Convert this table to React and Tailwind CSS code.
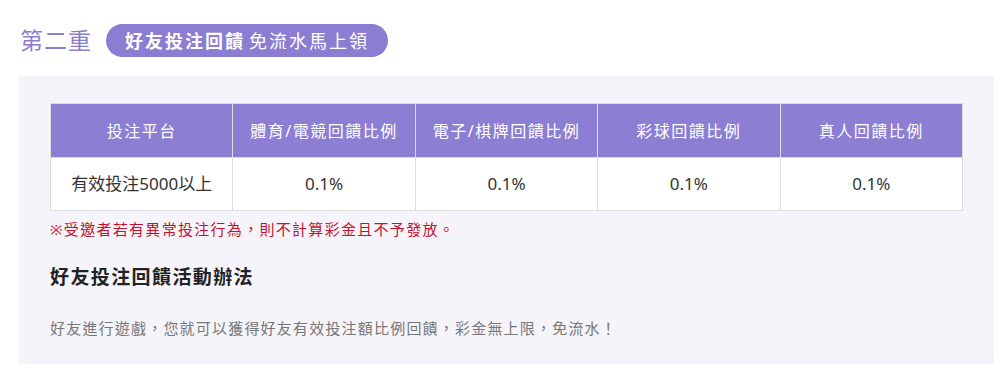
export default function App() {
  const heads = ["投注平台", "體育/電競回饋比例", "電子/棋牌回饋比例", "彩球回饋比例", "真人回饋比例"];
  const vals = ["有效投注5000以上", "0.1%", "0.1%", "0.1%", "0.1%"];
  return (
    <div className="w-[1007px] h-[376px] bg-white pt-[24px]" style={{ fontFamily: '"Noto Sans", "Noto Sans CJK TC", sans-serif' }}>
      <div className="flex items-center h-[33px] ml-[20px]">
        <span className="w-[72px] text-[23px] leading-none tracking-[1px] text-[#8a7fcc]">第二重</span>
        <span className="ml-[14px] h-[33px] w-[282px] pl-[19px] rounded-full bg-[#8b7dd1] text-white flex items-center text-[18px] tracking-[2px] leading-none">
          <b className="font-bold">好友投注回饋</b>
          <span className="ml-[4px]">免流水馬上領</span>
        </span>
      </div>
      <div className="mt-[19px] ml-[19px] w-[975px] h-[288px] bg-[#f5f4fa] pl-[31px] pt-[27px]">
        <table className="w-[913px] border-collapse table-fixed">
          <thead>
            <tr>
              {heads.map((h, i) => (
                <th key={i} className="h-[54px] bg-[#8b7ed3] border border-[#dddddd] text-white font-normal text-[16px] tracking-[1.5px] text-center">
                  {h}
                </th>
              ))}
            </tr>
          </thead>
          <tbody>
            <tr>
              {vals.map((v, i) => (
                <td key={i} className="h-[53px] bg-white border border-[#dddddd] text-[#333333] text-[17px] text-center">
                  {v}
                </td>
              ))}
            </tr>
          </tbody>
        </table>
        <p className="mt-[8px] text-[15px] leading-[20px] tracking-[1.3px] text-[#c8102e]">※受邀者若有異常投注行為，則不計算彩金且不予發放。</p>
        <h3 className="mt-[26px] text-[19px] leading-[24px] tracking-[1.4px] font-bold text-[#222222]">好友投注回饋活動辦法</h3>
        <p className="mt-[29px] text-[15px] leading-[20px] tracking-[1.2px] text-[#777777]">好友進行遊戲，您就可以獲得好友有效投注額比例回饋，彩金無上限，免流水！</p>
      </div>
    </div>
  );
}
